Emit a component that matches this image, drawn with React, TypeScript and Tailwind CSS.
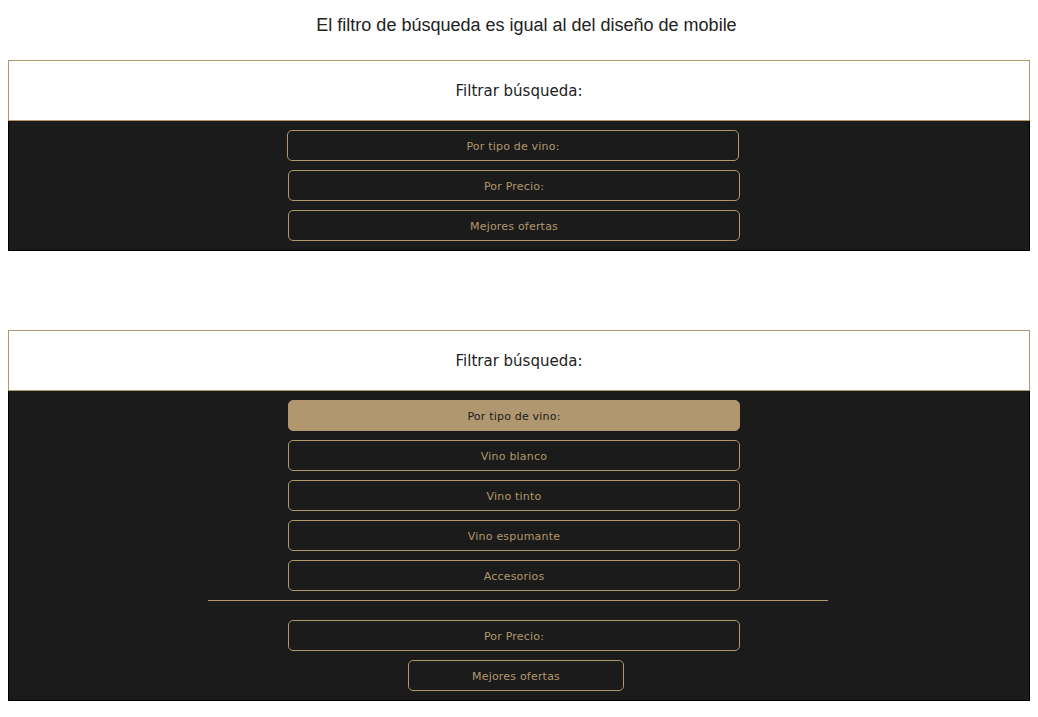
const gold = 'border-[#b1976b]';

function FilterButton({ label, active = false, className = '' }: { label: string; active?: boolean; className?: string }) {
  return (
    <button
      className={`h-[31px] pt-[2px] rounded-[5px] border text-[11px] tracking-[0.2px] leading-none ${gold} ${
        active ? 'bg-[#b1976f] text-[#1b1b1b]' : 'bg-transparent text-[#b1976b]'
      } ${className}`}
      style={{ fontFamily: '"DejaVu Sans", Verdana, sans-serif' }}
    >
      {label}
    </button>
  );
}

function PanelHeader() {
  return (
    <div className={`h-[61px] pt-[2px] border ${gold} bg-white flex items-center justify-center`}>
      <span
        className="text-[15px] text-[#222]"
        style={{ fontFamily: '"DejaVu Sans", Verdana, sans-serif' }}
      >
        Filtrar búsqueda:
      </span>
    </div>
  );
}

export default function App() {
  return (
    <div className="min-h-screen bg-white px-2" style={{ fontFamily: '"Liberation Sans", Arial, sans-serif' }}>
      {/* Title */}
      <p className="pt-[14px] pl-[15px] h-[60px] text-center text-[18px] leading-[22px] text-[#222]">
        El filtro de búsqueda es igual al del diseño de mobile
      </p>

      {/* Collapsed filter */}
      <div>
        <PanelHeader />
        <div className="bg-[#1b1b1b] border-x border-b border-black pt-[9px] pb-[9px] flex flex-col gap-[9px]">
          <FilterButton label="Por tipo de vino:" className="ml-[278px] w-[452px]" />
          <FilterButton label="Por Precio:" className="ml-[279px] w-[452px]" />
          <FilterButton label="Mejores ofertas" className="ml-[279px] w-[452px]" />
        </div>
      </div>

      {/* Expanded filter */}
      <div className="mt-[79px]">
        <PanelHeader />
        <div className="bg-[#1b1b1b] border-x border-b border-black pt-[9px] pb-[9px] flex flex-col gap-[9px]">
          <FilterButton label="Por tipo de vino:" active className="ml-[279px] w-[452px]" />
          <FilterButton label="Vino blanco" className="ml-[279px] w-[452px]" />
          <FilterButton label="Vino tinto" className="ml-[279px] w-[452px]" />
          <FilterButton label="Vino espumante" className="ml-[279px] w-[452px]" />
          <FilterButton label="Accesorios" className="ml-[279px] w-[452px]" />
          <hr className="ml-[199px] w-[620px] border-0 h-px bg-[#b1976b] mb-[10px]" />
          <FilterButton label="Por Precio:" className="ml-[279px] w-[452px]" />
          <FilterButton label="Mejores ofertas" className="ml-[399px] w-[216px]" />
        </div>
      </div>
    </div>
  );
}
